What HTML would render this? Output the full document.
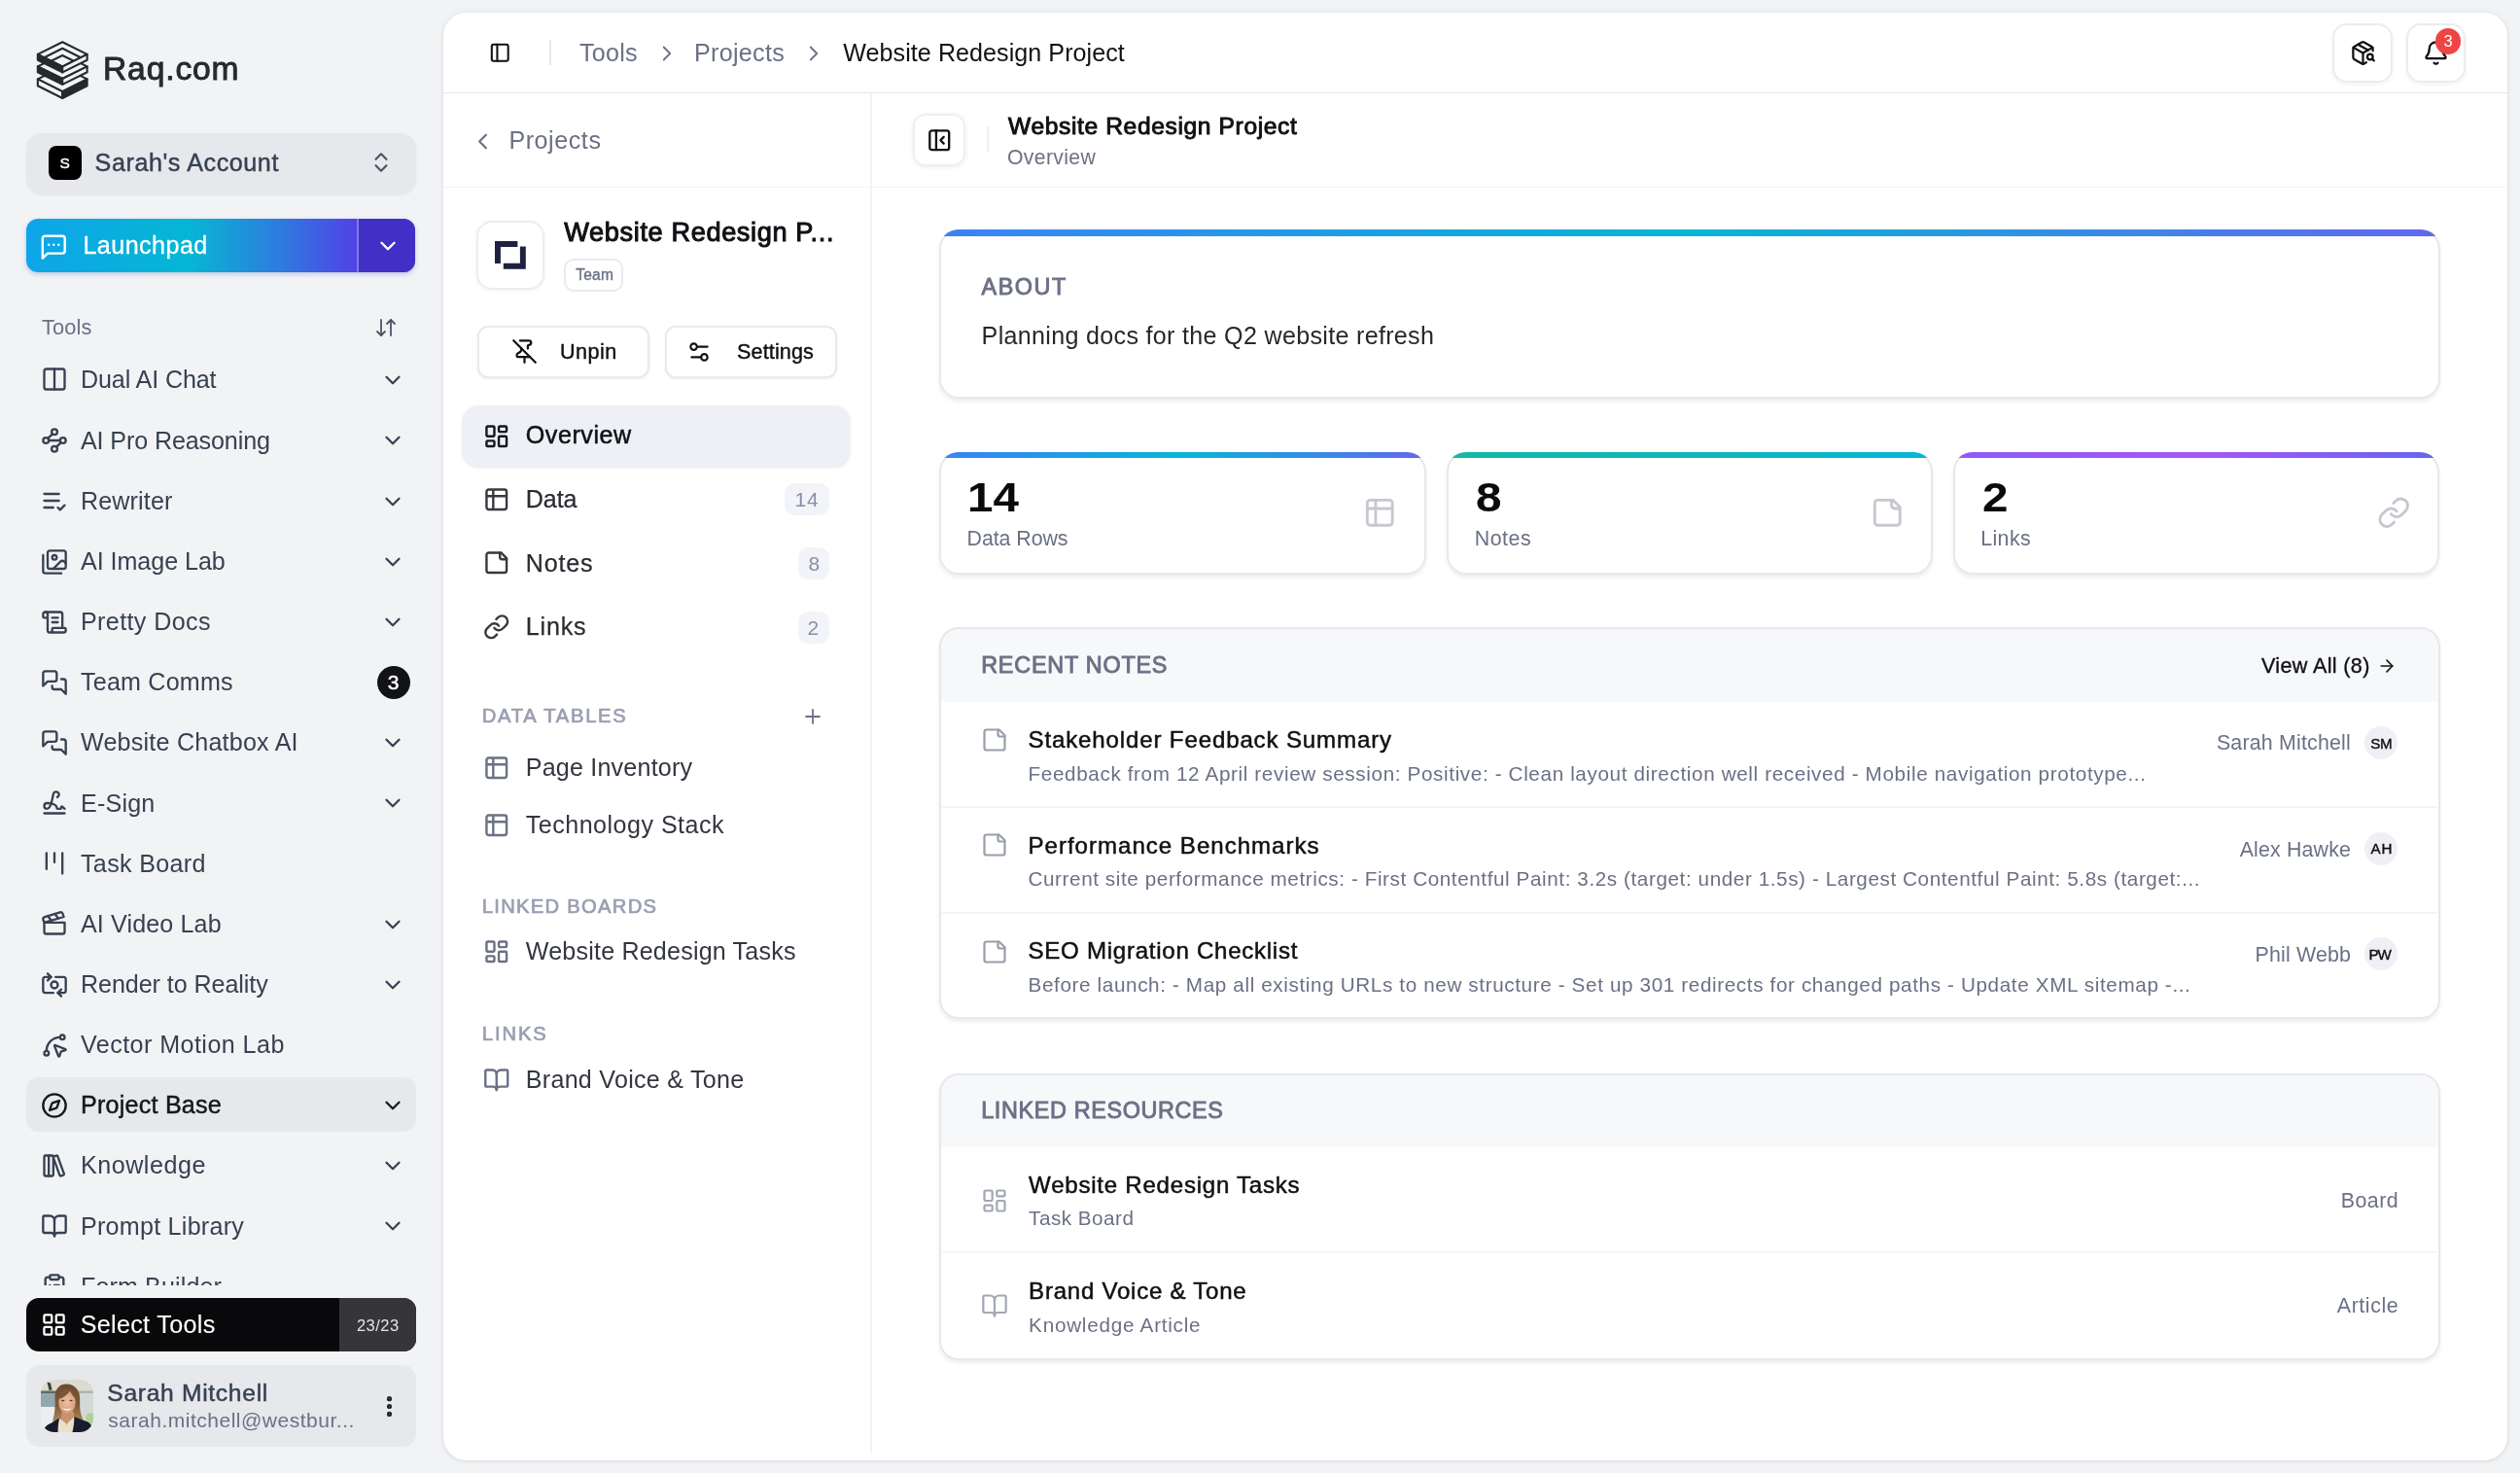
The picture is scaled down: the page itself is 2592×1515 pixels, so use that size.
<!DOCTYPE html>
<html lang="en"><head><meta charset="utf-8"><title>Website Redesign Project - Raq.com</title>
<style>
html,body{margin:0;padding:0}
body{width:2592px;height:1515px;overflow:hidden;background:#f2f3f5;font-family:"Liberation Sans", sans-serif;position:relative}
#r{position:absolute;left:0;top:0;width:2592px;height:1515px;overflow:hidden;will-change:transform}
#r div,#r svg,#r span{position:absolute;box-sizing:border-box}
#r svg{overflow:visible}
.t{white-space:nowrap;line-height:1;display:block}
</style></head>
<body><div id="r">
<div style="left:456px;top:13.3px;width:2122.8px;height:1489px;background:#fff;border-radius:24px;box-shadow:0 1px 4px rgba(20,20,40,.10),0 0 8px rgba(20,20,40,.04);"></div>
<svg style="left:32px;top:38px" width="64" height="68" viewBox="0 0 1386 1473" stroke="#262a2d" stroke-width="46" stroke-linejoin="round"><polygon points="698,665 1248,940 698,1215 148,940" fill="#f2f3f5"/><polygon points="148,940 698,1215 698,1365 148,1090" fill="#f2f3f5"/><polygon points="698,1215 1248,940 1248,1090 698,1365" fill="#262a2d"/><polygon points="698,383 1248,658 698,933 148,658" fill="#f2f3f5"/><polygon points="148,658 698,933 698,1059 148,784" fill="#262a2d"/><polygon points="698,933 1248,658 1248,784 698,1059" fill="#f2f3f5"/><polygon points="698,113 1248,388 698,663 148,388" fill="#f2f3f5"/><polygon points="698,255 1106,459 698,663 290,459" fill="none"/><polygon points="698,410 951,536.5 698,663 445,536.5" fill="none"/><polygon points="148,388 698,663 698,789 148,514" fill="#262a2d"/><polygon points="698,663 1248,388 1248,514 698,789" fill="#f2f3f5"/></svg>
<span class="t" style="top:54.36px;font-size:33.6px;color:#262a2d;-webkit-text-stroke:0.95px #262a2d;letter-spacing:0.868px;left:106.00px;">Raq.com</span>
<div style="left:27px;top:136.5px;width:401px;height:63px;background:#e6e8ec;border-radius:16px;box-shadow:0 1px 3px rgba(20,20,40,.05);"></div>
<div style="left:49.5px;top:150px;width:34.5px;height:34.5px;background:#000;border-radius:8px;"></div>
<span class="t" style="top:159.68px;font-size:15.5px;color:#fff;-webkit-text-stroke:0.35px #fff;left:61.60px;">S</span>
<span class="t" style="top:154.75px;font-size:25.1px;color:#374151;-webkit-text-stroke:0.45px #374151;letter-spacing:0.588px;left:97.60px;">Sarah's Account</span>
<svg style="left:378.5px;top:154px;" width="26" height="26" viewBox="0 0 24 24" fill="none" stroke="#4b5563" stroke-width="2" stroke-linecap="round" stroke-linejoin="round"><path d="m7 15 5 5 5-5"/><path d="m7 9 5-5 5 5"/></svg>
<div style="left:27px;top:225px;width:400px;height:55px;border-radius:12px;background:linear-gradient(90deg,#0ea5e9 0%,#06b6d4 42%,#2e7cde 65%,#4f46e5 83%);box-shadow:0 2px 5px rgba(40,60,160,.25);"></div>
<div style="left:367.4px;top:225px;width:59.6px;height:55px;border-radius:0 12px 12px 0;background:#4030c6;border-left:2px solid rgba(255,255,255,.35);"></div>
<svg style="left:40.15px;top:239.15px;" width="30.5" height="30.5" viewBox="0 0 24 24" fill="none" stroke="#fff" stroke-width="1.9" stroke-linecap="round" stroke-linejoin="round"><path d="M21 15a2 2 0 0 1-2 2H7l-4 4V5a2 2 0 0 1 2-2h14a2 2 0 0 1 2 2z"/><path d="M8 10h.01"/><path d="M12 10h.01"/><path d="M16 10h.01"/></svg>
<span class="t" style="top:239.95px;font-size:25.1px;color:#fff;-webkit-text-stroke:0.3px #fff;letter-spacing:0.458px;left:85.40px;">Launchpad</span>
<svg style="left:386px;top:240.3px;" width="26" height="26" viewBox="0 0 24 24" fill="none" stroke="#fff" stroke-width="2.2" stroke-linecap="round" stroke-linejoin="round"><path d="m6 9 6 6 6-6"/></svg>
<span class="t" style="top:325.85px;font-size:21.8px;color:#6b7085;letter-spacing:0.154px;left:42.90px;">Tools</span>
<svg style="left:385.2px;top:324.5px;" width="24" height="24" viewBox="0 0 24 24" fill="none" stroke="#4b5563" stroke-width="1.8" stroke-linecap="round" stroke-linejoin="round"><path d="m3 16 4 4 4-4"/><path d="M7 20V4"/><path d="m21 8-4-4-4 4"/><path d="M17 4v16"/></svg>
<div style="left:0;top:0;width:456px;height:1322px;overflow:hidden">
<svg style="left:42.4px;top:376.3px;" width="28" height="28" viewBox="0 0 24 24" fill="none" stroke="#374151" stroke-width="2" stroke-linecap="round" stroke-linejoin="round"><rect width="18" height="18" x="3" y="3" rx="2"/><path d="M12 3v18"/></svg>
<span class="t" style="top:377.70px;font-size:25.1px;color:#374151;letter-spacing:-0.118px;left:83.00px;">Dual AI Chat</span>
<svg style="left:391.3px;top:377.5px;" width="26" height="26" viewBox="0 0 24 24" fill="none" stroke="#374151" stroke-width="2.1" stroke-linecap="round" stroke-linejoin="round"><path d="m6 9 6 6 6-6"/></svg>
<svg style="left:42.4px;top:439.25px;" width="28" height="28" viewBox="0 0 24 24" fill="none" stroke="#374151" stroke-width="2" stroke-linecap="round" stroke-linejoin="round"><circle cx="12" cy="4.5" r="2.5"/><path d="m10.2 6.3-3.9 3.9"/><circle cx="4.5" cy="12" r="2.5"/><path d="M7 12h10"/><circle cx="19.5" cy="12" r="2.5"/><path d="m13.8 17.7 3.9-3.9"/><circle cx="12" cy="19.5" r="2.5"/></svg>
<span class="t" style="top:440.65px;font-size:25.1px;color:#374151;letter-spacing:-0.115px;left:83.00px;">AI Pro Reasoning</span>
<svg style="left:391.3px;top:440.45px;" width="26" height="26" viewBox="0 0 24 24" fill="none" stroke="#374151" stroke-width="2.1" stroke-linecap="round" stroke-linejoin="round"><path d="m6 9 6 6 6-6"/></svg>
<svg style="left:42.4px;top:501.4px;" width="28" height="28" viewBox="0 0 24 24" fill="none" stroke="#374151" stroke-width="2" stroke-linecap="round" stroke-linejoin="round"><path d="M11 18H3"/><path d="m15 18 2 2 4-4"/><path d="M16 12H3"/><path d="M16 6H3"/></svg>
<span class="t" style="top:502.80px;font-size:25.1px;color:#374151;letter-spacing:0.134px;left:83.00px;">Rewriter</span>
<svg style="left:391.3px;top:502.6px;" width="26" height="26" viewBox="0 0 24 24" fill="none" stroke="#374151" stroke-width="2.1" stroke-linecap="round" stroke-linejoin="round"><path d="m6 9 6 6 6-6"/></svg>
<svg style="left:42.4px;top:563.55px;" width="28" height="28" viewBox="0 0 24 24" fill="none" stroke="#374151" stroke-width="2" stroke-linecap="round" stroke-linejoin="round"><path d="M18 22H4a2 2 0 0 1-2-2V6"/><path d="m22 13-1.296-1.296a2.41 2.41 0 0 0-3.408 0L11 18"/><circle cx="12" cy="8" r="2"/><rect width="16" height="16" x="6" y="2" rx="2"/></svg>
<span class="t" style="top:564.95px;font-size:25.1px;color:#374151;letter-spacing:-0.046px;left:83.00px;">AI Image Lab</span>
<svg style="left:391.3px;top:564.75px;" width="26" height="26" viewBox="0 0 24 24" fill="none" stroke="#374151" stroke-width="2.1" stroke-linecap="round" stroke-linejoin="round"><path d="m6 9 6 6 6-6"/></svg>
<svg style="left:42.4px;top:625.7px;" width="28" height="28" viewBox="0 0 24 24" fill="none" stroke="#374151" stroke-width="2" stroke-linecap="round" stroke-linejoin="round"><path d="M15 12h-5"/><path d="M15 8h-5"/><path d="M19 17V5a2 2 0 0 0-2-2H4"/><path d="M8 21h12a2 2 0 0 0 2-2v-1a1 1 0 0 0-1-1H11a1 1 0 0 0-1 1v1a2 2 0 1 1-4 0V5a2 2 0 1 0-4 0v2a1 1 0 0 0 1 1h3"/></svg>
<span class="t" style="top:627.10px;font-size:25.1px;color:#374151;letter-spacing:0.376px;left:83.00px;">Pretty Docs</span>
<svg style="left:391.3px;top:626.9px;" width="26" height="26" viewBox="0 0 24 24" fill="none" stroke="#374151" stroke-width="2.1" stroke-linecap="round" stroke-linejoin="round"><path d="m6 9 6 6 6-6"/></svg>
<svg style="left:42.4px;top:687.85px;" width="28" height="28" viewBox="0 0 24 24" fill="none" stroke="#374151" stroke-width="2" stroke-linecap="round" stroke-linejoin="round"><path d="M14 9a2 2 0 0 1-2 2H6l-4 4V4a2 2 0 0 1 2-2h8a2 2 0 0 1 2 2z"/><path d="M18 9h2a2 2 0 0 1 2 2v11l-4-4h-6a2 2 0 0 1-2-2v-1"/></svg>
<span class="t" style="top:689.25px;font-size:25.1px;color:#374151;letter-spacing:0.198px;left:83.00px;">Team Comms</span>
<div style="left:387.5px;top:684.65px;width:34.2px;height:34.2px;background:#111318;border-radius:50%;"></div>
<span class="t" style="top:691.37px;font-size:21px;color:#fff;-webkit-text-stroke:0.5px #fff;left:398.70px;">3</span>
<svg style="left:42.4px;top:750px;" width="28" height="28" viewBox="0 0 24 24" fill="none" stroke="#374151" stroke-width="2" stroke-linecap="round" stroke-linejoin="round"><path d="M14 9a2 2 0 0 1-2 2H6l-4 4V4a2 2 0 0 1 2-2h8a2 2 0 0 1 2 2z"/><path d="M18 9h2a2 2 0 0 1 2 2v11l-4-4h-6a2 2 0 0 1-2-2v-1"/></svg>
<span class="t" style="top:751.40px;font-size:25.1px;color:#374151;letter-spacing:0.215px;left:83.00px;">Website Chatbox AI</span>
<svg style="left:391.3px;top:751.2px;" width="26" height="26" viewBox="0 0 24 24" fill="none" stroke="#374151" stroke-width="2.1" stroke-linecap="round" stroke-linejoin="round"><path d="m6 9 6 6 6-6"/></svg>
<svg style="left:42.4px;top:812.15px;" width="28" height="28" viewBox="0 0 24 24" fill="none" stroke="#374151" stroke-width="2" stroke-linecap="round" stroke-linejoin="round"><path d="m21 17-2.156-1.868A.5.5 0 0 0 18 15.5v.5a1 1 0 0 1-1 1h-2a1 1 0 0 1-1-1c0-2.545-3.991-3.97-8.5-4a1 1 0 0 0 0 5c4.153 0 4.745-11.295 5.708-13.5a2.5 2.5 0 1 1 3.31 3.284"/><path d="M3 21h18"/></svg>
<span class="t" style="top:813.55px;font-size:25.1px;color:#374151;letter-spacing:0.188px;left:83.00px;">E-Sign</span>
<svg style="left:391.3px;top:813.35px;" width="26" height="26" viewBox="0 0 24 24" fill="none" stroke="#374151" stroke-width="2.1" stroke-linecap="round" stroke-linejoin="round"><path d="m6 9 6 6 6-6"/></svg>
<svg style="left:42.4px;top:874.3px;" width="28" height="28" viewBox="0 0 24 24" fill="none" stroke="#374151" stroke-width="2" stroke-linecap="round" stroke-linejoin="round"><path d="M5 3v14"/><path d="M12 3v8"/><path d="M19 3v18"/></svg>
<span class="t" style="top:875.70px;font-size:25.1px;color:#374151;letter-spacing:0.314px;left:83.00px;">Task Board</span>
<svg style="left:42.4px;top:936.45px;" width="28" height="28" viewBox="0 0 24 24" fill="none" stroke="#374151" stroke-width="2" stroke-linecap="round" stroke-linejoin="round"><path d="M20.2 6 3 11l-.9-2.4c-.3-1.1.3-2.2 1.3-2.5l13.5-4c1.1-.3 2.2.3 2.5 1.3Z"/><path d="m6.2 5.3 3.1 3.9"/><path d="m12.4 3.4 3.1 4"/><path d="M3 11h18v8a2 2 0 0 1-2 2H5a2 2 0 0 1-2-2Z"/></svg>
<span class="t" style="top:937.85px;font-size:25.1px;color:#374151;letter-spacing:0.128px;left:83.00px;">AI Video Lab</span>
<svg style="left:391.3px;top:937.65px;" width="26" height="26" viewBox="0 0 24 24" fill="none" stroke="#374151" stroke-width="2.1" stroke-linecap="round" stroke-linejoin="round"><path d="m6 9 6 6 6-6"/></svg>
<svg style="left:42.4px;top:998.6px;" width="28" height="28" viewBox="0 0 24 24" fill="none" stroke="#374151" stroke-width="2" stroke-linecap="round" stroke-linejoin="round"><path d="M11 19H4a2 2 0 0 1-2-2V7a2 2 0 0 1 2-2h5"/><path d="M13 5h7a2 2 0 0 1 2 2v10a2 2 0 0 1-2 2h-5"/><circle cx="12" cy="12" r="3"/><path d="m18 22-3-3 3-3"/><path d="m6 2 3 3-3 3"/></svg>
<span class="t" style="top:1000.00px;font-size:25.1px;color:#374151;letter-spacing:-0.071px;left:83.00px;">Render to Reality</span>
<svg style="left:391.3px;top:999.8px;" width="26" height="26" viewBox="0 0 24 24" fill="none" stroke="#374151" stroke-width="2.1" stroke-linecap="round" stroke-linejoin="round"><path d="m6 9 6 6 6-6"/></svg>
<svg style="left:42.4px;top:1060.75px;" width="28" height="28" viewBox="0 0 24 24" fill="none" stroke="#374151" stroke-width="2" stroke-linecap="round" stroke-linejoin="round"><path d="M12.034 12.681a.498.498 0 0 1 .647-.647l9 3.5a.5.5 0 0 1-.033.943l-3.444 1.068a1 1 0 0 0-.66.66l-1.067 3.443a.5.5 0 0 1-.943.033z"/><path d="M5 17A12 12 0 0 1 17 5"/><circle cx="19" cy="5" r="2"/><circle cx="5" cy="19" r="2"/></svg>
<span class="t" style="top:1062.15px;font-size:25.1px;color:#374151;letter-spacing:0.443px;left:83.00px;">Vector Motion Lab</span>
<div style="left:27.3px;top:1108.2px;width:400.7px;height:55.5px;background:#e6e8ec;border-radius:13px;"></div>
<svg style="left:42.4px;top:1122.9px;" width="28" height="28" viewBox="0 0 24 24" fill="none" stroke="#15171c" stroke-width="2" stroke-linecap="round" stroke-linejoin="round"><path d="m16.24 7.76-1.804 5.411a2 2 0 0 1-1.265 1.265L7.76 16.24l1.804-5.411a2 2 0 0 1 1.265-1.265z"/><circle cx="12" cy="12" r="10"/></svg>
<span class="t" style="top:1124.30px;font-size:25.1px;color:#15171c;-webkit-text-stroke:0.45px #15171c;letter-spacing:0.226px;left:83.00px;">Project Base</span>
<svg style="left:391.3px;top:1124.1px;" width="26" height="26" viewBox="0 0 24 24" fill="none" stroke="#15171c" stroke-width="2.1" stroke-linecap="round" stroke-linejoin="round"><path d="m6 9 6 6 6-6"/></svg>
<svg style="left:42.4px;top:1185.05px;" width="28" height="28" viewBox="0 0 24 24" fill="none" stroke="#374151" stroke-width="2" stroke-linecap="round" stroke-linejoin="round"><rect width="8" height="18" x="3" y="3" rx="1"/><path d="M7 3v18"/><path d="M20.4 18.9c.2.5-.1 1.1-.6 1.3l-1.9.7c-.5.2-1.1-.1-1.3-.6L11.1 5.1c-.2-.5.1-1.1.6-1.3l1.9-.7c.5-.2 1.1.1 1.3.6Z"/></svg>
<span class="t" style="top:1186.45px;font-size:25.1px;color:#374151;letter-spacing:0.523px;left:83.00px;">Knowledge</span>
<svg style="left:391.3px;top:1186.25px;" width="26" height="26" viewBox="0 0 24 24" fill="none" stroke="#374151" stroke-width="2.1" stroke-linecap="round" stroke-linejoin="round"><path d="m6 9 6 6 6-6"/></svg>
<svg style="left:42.4px;top:1247.2px;" width="28" height="28" viewBox="0 0 24 24" fill="none" stroke="#374151" stroke-width="2" stroke-linecap="round" stroke-linejoin="round"><path d="M12 7v14"/><path d="M3 18a1 1 0 0 1-1-1V4a1 1 0 0 1 1-1h5a4 4 0 0 1 4 4 4 4 0 0 1 4-4h5a1 1 0 0 1 1 1v13a1 1 0 0 1-1 1h-6a3 3 0 0 0-3 3 3 3 0 0 0-3-3z"/></svg>
<span class="t" style="top:1248.60px;font-size:25.1px;color:#374151;letter-spacing:0.253px;left:83.00px;">Prompt Library</span>
<svg style="left:391.3px;top:1248.4px;" width="26" height="26" viewBox="0 0 24 24" fill="none" stroke="#374151" stroke-width="2.1" stroke-linecap="round" stroke-linejoin="round"><path d="m6 9 6 6 6-6"/></svg>
<svg style="left:42.4px;top:1309.35px;" width="28" height="28" viewBox="0 0 24 24" fill="none" stroke="#374151" stroke-width="2" stroke-linecap="round" stroke-linejoin="round"><rect width="8" height="4" x="8" y="2" rx="1" ry="1"/><path d="M16 4h2a2 2 0 0 1 2 2v14a2 2 0 0 1-2 2H6a2 2 0 0 1-2-2V6a2 2 0 0 1 2-2h2"/><path d="M12 11h4"/><path d="M12 16h4"/><path d="M8 11h.01"/><path d="M8 16h.01"/></svg>
<span class="t" style="top:1310.75px;font-size:25.1px;color:#374151;letter-spacing:0.121px;left:83.00px;">Form Builder</span>
</div>
<div style="left:27px;top:1334.6px;width:400.6px;height:55.5px;background:#09090b;border-radius:13px;overflow:hidden;"><div style="left:321.7px;top:0;width:79px;height:55.5px;background:#363639"></div></div>
<svg style="left:42.1px;top:1348.9px;" width="27" height="27" viewBox="0 0 24 24" fill="none" stroke="#fff" stroke-width="2" stroke-linecap="round" stroke-linejoin="round"><rect width="7" height="7" x="3" y="3" rx="1"/><rect width="7" height="7" x="14" y="3" rx="1"/><rect width="7" height="7" x="14" y="14" rx="1"/><rect width="7" height="7" x="3" y="14" rx="1"/></svg>
<span class="t" style="top:1349.95px;font-size:25.1px;color:#fff;-webkit-text-stroke:0.1px #fff;letter-spacing:0.332px;left:82.70px;">Select Tools</span>
<span class="t" style="top:1354.73px;font-size:16.5px;color:#e4e4e7;letter-spacing:0.447px;left:367.00px;">23/23</span>
<div style="left:27px;top:1404.2px;width:400.6px;height:83.6px;background:#e6e8ec;border-radius:14px;"></div>
<div style="left:42px;top:1419px;width:54px;height:54px;border-radius:14px;overflow:hidden"><svg style="left:0;top:0" width="54" height="54" viewBox="0 0 54 54">
<defs><filter id="avb" x="-10%" y="-10%" width="120%" height="120%"><feGaussianBlur stdDeviation="0.7"/></filter>
<linearGradient id="avh" x1="0" y1="0" x2="0" y2="1"><stop offset="0" stop-color="#6b4a30"/><stop offset=".55" stop-color="#80593a"/><stop offset="1" stop-color="#b38a5c"/></linearGradient>
<radialGradient id="avf" cx=".5" cy=".45" r=".6"><stop offset="0" stop-color="#ecc0a2"/><stop offset=".7" stop-color="#dca684"/><stop offset="1" stop-color="#c48c69"/></radialGradient></defs>
<g filter="url(#avb)">
<rect x="-2" y="-2" width="58" height="58" fill="#dfe3e1"/>
<rect x="-2" y="-2" width="58" height="14" fill="#dcdbcf"/>
<rect x="-2" y="11.500" width="18" height="3" fill="#5f6b67"/>
<rect x="-2" y="14" width="17" height="14.500" fill="#93a8ae"/>
<rect x="-2" y="28" width="16" height="28" fill="#eceff2"/>
<rect x="38" y="11.500" width="18" height="3" fill="#aab5b0"/>
<rect x="38" y="14" width="18" height="42" fill="#d3dad5"/>
<ellipse cx="51" cy="40" rx="5" ry="6" fill="#b4d097"/>
<path d="M6.500 2.500l3.500 1 1.500 7-3 .5z" fill="#3f3f36"/>
<path d="M26.500 4.500c-8 0-12.500 6-12 15 .3 7 .5 14-2.500 23l10 2 14-1 7.500-3c-3.500-6-3.500-13-3.300-20 .4-9-5-16-13.700-16z" fill="url(#avh)"/>
<path d="M21.500 33h12.500l.5 14h-14z" fill="#c9926e"/>
<ellipse cx="27" cy="23.300" rx="8.800" ry="11.800" fill="url(#avf)"/>
<path d="M18 20c.5-7 4.500-10.500 9-10.300 5 .2 8.500 4 9 10-3-2.500-5-5.500-6-8.500-2.500 4.500-6.500 7.500-12 8.800z" fill="#7a5538"/>
<ellipse cx="22.800" cy="21.500" rx="1.700" ry=".8" fill="#5a3b2a"/><ellipse cx="31" cy="21.500" rx="1.700" ry=".8" fill="#5a3b2a"/>
<path d="M22.500 29.300c2.500 1.400 6.500 1.400 9 0-.8 3.300-8.200 3.300-9 0z" fill="#fbf3ee"/>
<path d="M19 39.500l7.500 6 7.500-7 2 15.500h-20z" fill="#eadfc9"/>
<path d="M23.500 38l3 9 4-9.500z" fill="#c9926e"/>
<path d="M3 56c-.5-6 2-9 7-11l9-5.500c-1 5-1.500 10-1.500 16.500z" fill="#161a2b"/>
<path d="M34.500 38.300l12 4.500c5 2 7 5 7.500 13.200h-22c1.500-6 2.500-12 2.500-17.700z" fill="#161a2b"/>
</g></svg></div>

<span class="t" style="top:1420.58px;font-size:24.6px;color:#374151;-webkit-text-stroke:0.5px #374151;letter-spacing:0.703px;left:110.30px;">Sarah Mitchell</span>
<span class="t" style="top:1449.82px;font-size:21px;color:#6b7085;letter-spacing:0.512px;left:111.30px;">sarah.mitchell@westbur...</span>
<svg style="left:387.3px;top:1432.9px;" width="27" height="27" viewBox="0 0 24 24" fill="none" stroke="#23262d" stroke-width="2.6" stroke-linecap="round" stroke-linejoin="round"><circle cx="12" cy="12" r="1"/><circle cx="12" cy="5" r="1"/><circle cx="12" cy="19" r="1"/></svg>
<div style="left:456px;top:94.6px;width:2123px;height:1.4px;background:#e4e5ec;"></div>
<svg style="left:502.55px;top:43.45px;" width="22.5" height="22.5" viewBox="0 0 24 24" fill="none" stroke="#111" stroke-width="2.2" stroke-linecap="round" stroke-linejoin="round"><rect width="18" height="18" x="3" y="3" rx="2"/><path d="M9 3v18"/></svg>
<div style="left:565px;top:41px;width:2px;height:26px;background:#e7e8ee;"></div>
<span class="t" style="top:41.55px;font-size:25.1px;color:#6b7085;letter-spacing:0.217px;left:596.10px;">Tools</span>
<svg style="left:672.6px;top:41.8px;" width="26" height="26" viewBox="0 0 24 24" fill="none" stroke="#6b7085" stroke-width="1.7" stroke-linecap="round" stroke-linejoin="round"><path d="m9 18 6-6-6-6"/></svg>
<span class="t" style="top:41.55px;font-size:25.1px;color:#6b7085;letter-spacing:0.286px;left:714.10px;">Projects</span>
<svg style="left:824px;top:41.8px;" width="26" height="26" viewBox="0 0 24 24" fill="none" stroke="#6b7085" stroke-width="1.7" stroke-linecap="round" stroke-linejoin="round"><path d="m9 18 6-6-6-6"/></svg>
<span class="t" style="top:41.55px;font-size:25.1px;color:#101114;letter-spacing:0.053px;left:867.30px;">Website Redesign Project</span>
<div style="left:2398.8px;top:24.2px;width:62px;height:60.8px;background:#fff;border:2px solid #ebecf2;border-radius:15px;box-shadow:0 2px 4px rgba(20,20,40,.05);"></div>
<div style="left:2474.8px;top:24.2px;width:61.5px;height:60.8px;background:#fff;border:2px solid #ebecf2;border-radius:15px;box-shadow:0 2px 4px rgba(20,20,40,.05);"></div>
<svg style="left:2417.1px;top:41px;" width="27" height="27" viewBox="0 0 24 24" fill="none" stroke="#111" stroke-width="2" stroke-linecap="round" stroke-linejoin="round"><path d="M21 10V8a2 2 0 0 0-1-1.73l-7-4a2 2 0 0 0-2 0l-7 4A2 2 0 0 0 3 8v8a2 2 0 0 0 1 1.73l7 4a2 2 0 0 0 2 0l2-1.14"/><path d="m7.5 4.27 9 5.15"/><polyline points="3.29 7 12 12 20.71 7"/><line x1="12" x2="12" y1="22" y2="12"/><circle cx="18.5" cy="15.5" r="2.5"/><path d="M20.27 17.27 22 19"/></svg>
<svg style="left:2491.8px;top:41.3px;" width="27" height="27" viewBox="0 0 24 24" fill="none" stroke="#111" stroke-width="2" stroke-linecap="round" stroke-linejoin="round"><path d="M10.268 21a2 2 0 0 0 3.464 0"/><path d="M3.262 15.326A1 1 0 0 0 4 17h16a1 1 0 0 0 .74-1.673C19.41 13.956 18 12.499 18 8A6 6 0 0 0 6 8c0 4.499-1.411 5.956-2.738 7.326"/></svg>
<div style="left:2504.7px;top:29.2px;width:26.6px;height:26.6px;background:#ef4444;border-radius:50%;"></div>
<span class="t" style="top:34.23px;font-size:16.5px;color:#fff;left:2513.60px;">3</span>
<div style="left:456px;top:191.6px;width:2122px;height:1.8px;background:#f2f3f6;"></div>
<div style="left:894.8px;top:96px;width:2px;height:1398px;background:#f2f3f6;"></div>
<svg style="left:483.1px;top:131.7px;" width="27" height="27" viewBox="0 0 24 24" fill="none" stroke="#6b7085" stroke-width="1.9" stroke-linecap="round" stroke-linejoin="round"><path d="m15 18-6-6 6-6"/></svg>
<span class="t" style="top:132.05px;font-size:25.1px;color:#6b7085;letter-spacing:0.557px;left:523.40px;">Projects</span>
<div style="left:939.4px;top:117.4px;width:53.2px;height:53.4px;background:#fff;border:2px solid #eeeff3;border-radius:13px;box-shadow:0 1px 5px rgba(20,20,40,.08);"></div>
<svg style="left:952.95px;top:131.15px;" width="26.5" height="26.5" viewBox="0 0 24 24" fill="none" stroke="#111" stroke-width="2.1" stroke-linecap="round" stroke-linejoin="round"><rect width="18" height="18" x="3" y="3" rx="2"/><path d="M9 3v18"/><path d="m16 15-3-3 3-3"/></svg>
<div style="left:1014.5px;top:130px;width:2px;height:27px;background:#eeeff4;"></div>
<span class="t" style="top:117.58px;font-size:24.6px;color:#101114;-webkit-text-stroke:0.95px #101114;letter-spacing:0.622px;left:1037.00px;">Website Redesign Project</span>
<span class="t" style="top:150.55px;font-size:21.2px;color:#6b7085;letter-spacing:0.357px;left:1036.00px;">Overview</span>
<div style="left:489.8px;top:227px;width:70.4px;height:70.5px;background:#fff;border:2px solid #ededf2;border-radius:16px;box-shadow:0 1px 4px rgba(20,20,40,.06);"></div>
<svg style="left:509px;top:248px" width="32" height="29" viewBox="0 0 32 29" fill="none" stroke="#1e2140" stroke-width="5.900"><path d="M2.950 22.900V2.950H23.400"/><path d="M8.800 25.700H28.850V5.600"/></svg>
<span class="t" style="top:224.98px;font-size:27.2px;color:#101114;-webkit-text-stroke:1px #101114;letter-spacing:0.609px;left:580.30px;">Website Redesign P...</span>
<div style="left:579.6px;top:266px;width:61.8px;height:33.6px;background:#fff;border:2px solid #e9eaf0;border-radius:10px;"></div>
<span class="t" style="top:274.79px;font-size:15.6px;color:#6b7085;-webkit-text-stroke:0.35px #6b7085;letter-spacing:0.220px;left:592.20px;">Team</span>
<div style="left:491px;top:335px;width:177px;height:53.6px;background:#fff;border:2px solid #e9eaf0;border-radius:11px;box-shadow:0 1px 3px rgba(20,20,40,.07);"></div>
<div style="left:683.6px;top:335px;width:177px;height:53.6px;background:#fff;border:2px solid #e9eaf0;border-radius:11px;box-shadow:0 1px 3px rgba(20,20,40,.07);"></div>
<svg style="left:525.6px;top:348.3px;" width="27" height="27" viewBox="0 0 24 24" fill="none" stroke="#111" stroke-width="2" stroke-linecap="round" stroke-linejoin="round"><path d="M12 17v5"/><path d="M15 9.34V7a1 1 0 0 1 1-1 2 2 0 0 0 0-4H7.89"/><path d="m2 2 20 20"/><path d="M9 9v1.76a2 2 0 0 1-1.11 1.79l-1.78.9A2 2 0 0 0 5 15.24V16a1 1 0 0 0 1 1h11"/></svg>
<span class="t" style="top:350.72px;font-size:21.6px;color:#101114;-webkit-text-stroke:0.4px #101114;letter-spacing:0.422px;left:576.10px;">Unpin</span>
<svg style="left:706px;top:348.8px;" width="26" height="26" viewBox="0 0 24 24" fill="none" stroke="#111" stroke-width="2" stroke-linecap="round" stroke-linejoin="round"><path d="M20 7h-9"/><path d="M14 17H5"/><circle cx="17" cy="17" r="3"/><circle cx="7" cy="7" r="3"/></svg>
<span class="t" style="top:350.72px;font-size:21.6px;color:#101114;-webkit-text-stroke:0.4px #101114;letter-spacing:0.110px;left:758.10px;">Settings</span>
<div style="left:474.8px;top:416.8px;width:399.8px;height:64.1px;background:#eff0f6;border-radius:17px;box-shadow:0 1px 3px rgba(20,20,40,.06);"></div>
<svg style="left:496.65px;top:435.05px;" width="27.5" height="27.5" viewBox="0 0 24 24" fill="none" stroke="#15171c" stroke-width="2.1" stroke-linecap="round" stroke-linejoin="round"><rect width="7" height="9" x="3" y="3" rx="1"/><rect width="7" height="5" x="14" y="3" rx="1"/><rect width="7" height="9" x="14" y="12" rx="1"/><rect width="7" height="5" x="3" y="16" rx="1"/></svg>
<span class="t" style="top:435.15px;font-size:25.1px;color:#101114;-webkit-text-stroke:0.5px #101114;letter-spacing:0.535px;left:540.80px;">Overview</span>
<svg style="left:496.65px;top:499.75px;" width="27.5" height="27.5" viewBox="0 0 24 24" fill="none" stroke="#38393f" stroke-width="2.1" stroke-linecap="round" stroke-linejoin="round"><path d="M9 3H5a2 2 0 0 0-2 2v4m6-6h10a2 2 0 0 1 2 2v4M9 3v18m0 0h10a2 2 0 0 0 2-2V9M9 21H5a2 2 0 0 1-2-2V9m0 0h18"/></svg>
<span class="t" style="top:500.85px;font-size:25.1px;color:#2b2c31;-webkit-text-stroke:0.25px #2b2c31;letter-spacing:-0.083px;left:540.80px;">Data</span>
<div style="left:807px;top:497.1px;width:46px;height:33px;background:#f3f4f9;border-radius:10px;"></div>
<span class="t" style="top:503.02px;font-size:21px;color:#8a8ea3;letter-spacing:0.821px;left:817.50px;">14</span>
<svg style="left:496.65px;top:565.45px;" width="27.5" height="27.5" viewBox="0 0 24 24" fill="none" stroke="#38393f" stroke-width="2.1" stroke-linecap="round" stroke-linejoin="round"><path d="M16 3H5a2 2 0 0 0-2 2v14a2 2 0 0 0 2 2h14a2 2 0 0 0 2-2V8Z"/><path d="M15 3v4a2 2 0 0 0 2 2h4"/></svg>
<span class="t" style="top:566.55px;font-size:25.1px;color:#2b2c31;-webkit-text-stroke:0.25px #2b2c31;letter-spacing:0.799px;left:540.80px;">Notes</span>
<div style="left:820.6px;top:562.8px;width:32.4px;height:33px;background:#f3f4f9;border-radius:10px;"></div>
<span class="t" style="top:568.72px;font-size:21px;color:#8a8ea3;left:831.50px;">8</span>
<svg style="left:496.65px;top:631.25px;" width="27.5" height="27.5" viewBox="0 0 24 24" fill="none" stroke="#38393f" stroke-width="2.1" stroke-linecap="round" stroke-linejoin="round"><path d="M10 13a5 5 0 0 0 7.54.54l3-3a5 5 0 0 0-7.07-7.07l-1.72 1.71"/><path d="M14 11a5 5 0 0 0-7.54-.54l-3 3a5 5 0 0 0 7.07 7.07l1.71-1.71"/></svg>
<span class="t" style="top:632.35px;font-size:25.1px;color:#2b2c31;-webkit-text-stroke:0.25px #2b2c31;letter-spacing:0.792px;left:540.80px;">Links</span>
<div style="left:820.6px;top:628.6px;width:32.4px;height:33px;background:#f3f4f9;border-radius:10px;"></div>
<span class="t" style="top:634.52px;font-size:21px;color:#8a8ea3;left:830.50px;">2</span>
<span class="t" style="top:726.40px;font-size:20.2px;color:#9a9eb2;-webkit-text-stroke:0.7px #9a9eb2;letter-spacing:1.700px;left:495.80px;">DATA TABLES</span>
<svg style="left:823.5px;top:724.7px;" width="24" height="24" viewBox="0 0 24 24" fill="none" stroke="#6b7085" stroke-width="1.8" stroke-linecap="round" stroke-linejoin="round"><path d="M5 12h14"/><path d="M12 5v14"/></svg>
<span class="t" style="top:921.60px;font-size:20.2px;color:#9a9eb2;-webkit-text-stroke:0.7px #9a9eb2;letter-spacing:1.282px;left:495.80px;">LINKED BOARDS</span>
<span class="t" style="top:1052.50px;font-size:20.2px;color:#9a9eb2;-webkit-text-stroke:0.7px #9a9eb2;letter-spacing:1.905px;left:495.80px;">LINKS</span>
<svg style="left:496.65px;top:775.55px;" width="27.5" height="27.5" viewBox="0 0 24 24" fill="none" stroke="#6b7085" stroke-width="2.1" stroke-linecap="round" stroke-linejoin="round"><path d="M9 3H5a2 2 0 0 0-2 2v4m6-6h10a2 2 0 0 1 2 2v4M9 3v18m0 0h10a2 2 0 0 0 2-2V9M9 21H5a2 2 0 0 1-2-2V9m0 0h18"/></svg>
<span class="t" style="top:776.65px;font-size:25.1px;color:#33363f;letter-spacing:0.189px;left:540.80px;">Page Inventory</span>
<svg style="left:496.65px;top:834.55px;" width="27.5" height="27.5" viewBox="0 0 24 24" fill="none" stroke="#6b7085" stroke-width="2.1" stroke-linecap="round" stroke-linejoin="round"><path d="M9 3H5a2 2 0 0 0-2 2v4m6-6h10a2 2 0 0 1 2 2v4M9 3v18m0 0h10a2 2 0 0 0 2-2V9M9 21H5a2 2 0 0 1-2-2V9m0 0h18"/></svg>
<span class="t" style="top:835.65px;font-size:25.1px;color:#33363f;letter-spacing:0.471px;left:540.80px;">Technology Stack</span>
<svg style="left:496.65px;top:964.85px;" width="27.5" height="27.5" viewBox="0 0 24 24" fill="none" stroke="#6b7085" stroke-width="2.1" stroke-linecap="round" stroke-linejoin="round"><rect width="7" height="9" x="3" y="3" rx="1"/><rect width="7" height="5" x="14" y="3" rx="1"/><rect width="7" height="9" x="14" y="12" rx="1"/><rect width="7" height="5" x="3" y="16" rx="1"/></svg>
<span class="t" style="top:965.95px;font-size:25.1px;color:#33363f;letter-spacing:0.183px;left:540.80px;">Website Redesign Tasks</span>
<svg style="left:496.65px;top:1096.55px;" width="27.5" height="27.5" viewBox="0 0 24 24" fill="none" stroke="#6b7085" stroke-width="2.1" stroke-linecap="round" stroke-linejoin="round"><path d="M12 7v14"/><path d="M3 18a1 1 0 0 1-1-1V4a1 1 0 0 1 1-1h5a4 4 0 0 1 4 4 4 4 0 0 1 4-4h5a1 1 0 0 1 1 1v13a1 1 0 0 1-1 1h-6a3 3 0 0 0-3 3 3 3 0 0 0-3-3z"/></svg>
<span class="t" style="top:1097.65px;font-size:25.1px;color:#33363f;letter-spacing:0.261px;left:540.80px;">Brand Voice &amp; Tone</span>
<div style="left:965.8px;top:235.5px;width:1543.8px;height:174.2px;background:#fff;border-radius:20px;box-shadow:0 3px 5px -1px rgba(20,20,40,.10);"></div>
<div style="left:965.8px;top:235.5px;width:1543.8px;height:174.2px;border-radius:20px;border:2px solid #e7e8ec;"></div>
<div style="left:965.8px;top:235.5px;width:1543.8px;height:174.2px;border-radius:20px;overflow:hidden;"><div style="left:0;top:0;width:1543.8px;height:7px;background:linear-gradient(90deg,#3b82f6 0%,#06b6d4 50%,#6366f1 100%)"></div></div>
<span class="t" style="top:283.79px;font-size:23.4px;color:#6b7085;-webkit-text-stroke:0.9px #6b7085;letter-spacing:1.528px;left:1009.60px;">ABOUT</span>
<span class="t" style="top:333.05px;font-size:25.1px;color:#26282e;letter-spacing:0.308px;left:1009.60px;">Planning docs for the Q2 website refresh</span>
<div style="left:966.1px;top:464.8px;width:500.8px;height:125.8px;background:#fff;border-radius:20px;box-shadow:0 3px 5px -1px rgba(20,20,40,.10);"></div>
<div style="left:966.1px;top:464.8px;width:500.8px;height:125.8px;border-radius:20px;border:2px solid #e7e8ec;"></div>
<div style="left:966.1px;top:464.8px;width:500.8px;height:125.8px;border-radius:20px;overflow:hidden;"><div style="left:0;top:0;width:500.8px;height:6.2px;background:linear-gradient(90deg,#3b82f6,#06b6d4 50%,#6366f1)"></div></div>
<span class="t" style="top:490.92px;font-size:41.8px;color:#0a0a0c;font-weight:700;left:995.30px;transform:scaleX(1.14);transform-origin:0 0;">14</span>
<span class="t" style="top:544.08px;font-size:21.4px;color:#6b7085;letter-spacing:-0.090px;left:994.60px;">Data Rows</span>
<svg style="left:1402.25px;top:510.15px;" width="34.5" height="34.5" viewBox="0 0 24 24" fill="none" stroke="#c6c8cf" stroke-width="2" stroke-linecap="round" stroke-linejoin="round"><path d="M9 3H5a2 2 0 0 0-2 2v4m6-6h10a2 2 0 0 1 2 2v4M9 3v18m0 0h10a2 2 0 0 0 2-2V9M9 21H5a2 2 0 0 1-2-2V9m0 0h18"/></svg>
<div style="left:1488.2px;top:464.8px;width:499.4px;height:125.8px;background:#fff;border-radius:20px;box-shadow:0 3px 5px -1px rgba(20,20,40,.10);"></div>
<div style="left:1488.2px;top:464.8px;width:499.4px;height:125.8px;border-radius:20px;border:2px solid #e7e8ec;"></div>
<div style="left:1488.2px;top:464.8px;width:499.4px;height:125.8px;border-radius:20px;overflow:hidden;"><div style="left:0;top:0;width:499.4px;height:6.2px;background:linear-gradient(90deg,#14b8a6,#06b6d4)"></div></div>
<span class="t" style="top:490.92px;font-size:41.8px;color:#0a0a0c;font-weight:700;left:1518.40px;transform:scaleX(1.14);transform-origin:0 0;">8</span>
<span class="t" style="top:544.08px;font-size:21.4px;color:#6b7085;letter-spacing:0.529px;left:1516.70px;">Notes</span>
<svg style="left:1924.35px;top:510.15px;" width="34.5" height="34.5" viewBox="0 0 24 24" fill="none" stroke="#c6c8cf" stroke-width="2" stroke-linecap="round" stroke-linejoin="round"><path d="M16 3H5a2 2 0 0 0-2 2v14a2 2 0 0 0 2 2h14a2 2 0 0 0 2-2V8Z"/><path d="M15 3v4a2 2 0 0 0 2 2h4"/></svg>
<div style="left:2008.7px;top:464.8px;width:500.1px;height:125.8px;background:#fff;border-radius:20px;box-shadow:0 3px 5px -1px rgba(20,20,40,.10);"></div>
<div style="left:2008.7px;top:464.8px;width:500.1px;height:125.8px;border-radius:20px;border:2px solid #e7e8ec;"></div>
<div style="left:2008.7px;top:464.8px;width:500.1px;height:125.8px;border-radius:20px;overflow:hidden;"><div style="left:0;top:0;width:500.1px;height:6.2px;background:linear-gradient(90deg,#8b5cf6,#a855f7 50%,#6366f1)"></div></div>
<span class="t" style="top:490.92px;font-size:41.8px;color:#0a0a0c;font-weight:700;left:2038.90px;transform:scaleX(1.14);transform-origin:0 0;">2</span>
<span class="t" style="top:544.08px;font-size:21.4px;color:#6b7085;letter-spacing:0.390px;left:2037.20px;">Links</span>
<svg style="left:2444.85px;top:510.15px;" width="34.5" height="34.5" viewBox="0 0 24 24" fill="none" stroke="#c6c8cf" stroke-width="2" stroke-linecap="round" stroke-linejoin="round"><path d="M10 13a5 5 0 0 0 7.54.54l3-3a5 5 0 0 0-7.07-7.07l-1.72 1.71"/><path d="M14 11a5 5 0 0 0-7.54-.54l-3 3a5 5 0 0 0 7.07 7.07l1.71-1.71"/></svg>
<div style="left:965.8px;top:645.2px;width:1543.8px;height:403.2px;background:#fff;border-radius:20px;box-shadow:0 3px 5px -1px rgba(20,20,40,.10);"></div>
<div style="left:965.8px;top:645.2px;width:1543.8px;height:403.2px;border-radius:20px;overflow:hidden;"><div style="left:0;top:0;width:1543.8px;height:76.8px;background:#f7f8fa"></div></div>
<div style="left:965.8px;top:645.2px;width:1543.8px;height:403.2px;border-radius:20px;border:2px solid #e7e8ec;"></div>
<span class="t" style="top:673.19px;font-size:23.4px;color:#6b7085;-webkit-text-stroke:0.9px #6b7085;letter-spacing:0.769px;left:1009.20px;">RECENT NOTES</span>
<span class="t" style="top:673.72px;font-size:21.6px;color:#101114;-webkit-text-stroke:0.35px #101114;letter-spacing:0.354px;left:2325.90px;">View All (8)</span>
<svg style="left:2445.4px;top:674.6px;" width="20" height="20" viewBox="0 0 24 24" fill="none" stroke="#111" stroke-width="1.9" stroke-linecap="round" stroke-linejoin="round"><path d="M5 12h14"/><path d="m12 5 7 7-7 7"/></svg>
<svg style="left:1009.1px;top:746.8px;" width="28" height="28" viewBox="0 0 24 24" fill="none" stroke="#9a9eab" stroke-width="1.9" stroke-linecap="round" stroke-linejoin="round"><path d="M16 3H5a2 2 0 0 0-2 2v14a2 2 0 0 0 2 2h14a2 2 0 0 0 2-2V8Z"/><path d="M15 3v4a2 2 0 0 0 2 2h4"/></svg>
<span class="t" style="top:749.20px;font-size:24.1px;color:#101114;-webkit-text-stroke:0.5px #101114;letter-spacing:0.840px;left:1057.50px;">Stakeholder Feedback Summary</span>
<span class="t" style="top:786.08px;font-size:20.7px;color:#6b7085;letter-spacing:0.625px;left:1057.50px;">Feedback from 12 April review session: Positive: - Clean layout direction well received - Mobile navigation prototype...</span>
<span class="t" style="top:753.78px;font-size:21.4px;color:#6b7085;letter-spacing:0.179px;left:2279.90px;">Sarah Mitchell</span>
<div style="left:2431.5px;top:747.2px;width:34.2px;height:34.2px;background:#eff0f6;border-radius:50%;"></div>
<span class="t" style="top:757.03px;font-size:15.2px;color:#111;-webkit-text-stroke:0.4px #111;letter-spacing:-0.430px;left:2438.30px;">SM</span>
<div style="left:969px;top:829.4px;width:1538px;height:2px;background:#f4f5f8;"></div>
<svg style="left:1009.1px;top:855.2px;" width="28" height="28" viewBox="0 0 24 24" fill="none" stroke="#9a9eab" stroke-width="1.9" stroke-linecap="round" stroke-linejoin="round"><path d="M16 3H5a2 2 0 0 0-2 2v14a2 2 0 0 0 2 2h14a2 2 0 0 0 2-2V8Z"/><path d="M15 3v4a2 2 0 0 0 2 2h4"/></svg>
<span class="t" style="top:857.60px;font-size:24.1px;color:#101114;-webkit-text-stroke:0.5px #101114;letter-spacing:0.977px;left:1057.50px;">Performance Benchmarks</span>
<span class="t" style="top:894.48px;font-size:20.7px;color:#6b7085;letter-spacing:0.580px;left:1057.50px;">Current site performance metrics: - First Contentful Paint: 3.2s (target: under 1.5s) - Largest Contentful Paint: 5.8s (target:...</span>
<span class="t" style="top:863.78px;font-size:21.4px;color:#6b7085;letter-spacing:0.140px;left:2303.70px;">Alex Hawke</span>
<div style="left:2431.5px;top:855.6px;width:34.2px;height:34.2px;background:#eff0f6;border-radius:50%;"></div>
<span class="t" style="top:865.43px;font-size:15.2px;color:#111;-webkit-text-stroke:0.4px #111;letter-spacing:0.670px;left:2438.60px;">AH</span>
<div style="left:969px;top:937.6px;width:1538px;height:2px;background:#f4f5f8;"></div>
<svg style="left:1009.1px;top:964.8px;" width="28" height="28" viewBox="0 0 24 24" fill="none" stroke="#9a9eab" stroke-width="1.9" stroke-linecap="round" stroke-linejoin="round"><path d="M16 3H5a2 2 0 0 0-2 2v14a2 2 0 0 0 2 2h14a2 2 0 0 0 2-2V8Z"/><path d="M15 3v4a2 2 0 0 0 2 2h4"/></svg>
<span class="t" style="top:965.80px;font-size:24.1px;color:#101114;-webkit-text-stroke:0.5px #101114;letter-spacing:0.718px;left:1057.50px;">SEO Migration Checklist</span>
<span class="t" style="top:1002.68px;font-size:20.7px;color:#6b7085;letter-spacing:0.620px;left:1057.50px;">Before launch: - Map all existing URLs to new structure - Set up 301 redirects for changed paths - Update XML sitemap -...</span>
<span class="t" style="top:971.98px;font-size:21.4px;color:#6b7085;letter-spacing:0.149px;left:2319.60px;">Phil Webb</span>
<div style="left:2431.5px;top:963.8px;width:34.2px;height:34.2px;background:#eff0f6;border-radius:50%;"></div>
<span class="t" style="top:973.63px;font-size:15.2px;color:#111;-webkit-text-stroke:0.4px #111;letter-spacing:-1.130px;left:2436.60px;">PW</span>
<div style="left:965.8px;top:1103.8px;width:1543.8px;height:295px;background:#fff;border-radius:20px;box-shadow:0 3px 5px -1px rgba(20,20,40,.10);"></div>
<div style="left:965.8px;top:1103.8px;width:1543.8px;height:295px;border-radius:20px;overflow:hidden;"><div style="left:0;top:0;width:1543.8px;height:76.1px;background:#f7f8fa"></div></div>
<div style="left:965.8px;top:1103.8px;width:1543.8px;height:295px;border-radius:20px;border:2px solid #e7e8ec;"></div>
<span class="t" style="top:1131.09px;font-size:23.4px;color:#6b7085;-webkit-text-stroke:0.9px #6b7085;letter-spacing:0.636px;left:1009.20px;">LINKED RESOURCES</span>
<div style="left:969px;top:1286.8px;width:1538px;height:2px;background:#f4f5f8;"></div>
<svg style="left:1009.1px;top:1220.9px;" width="28" height="28" viewBox="0 0 24 24" fill="none" stroke="#a3a7b3" stroke-width="1.9" stroke-linecap="round" stroke-linejoin="round"><rect width="7" height="9" x="3" y="3" rx="1"/><rect width="7" height="5" x="14" y="3" rx="1"/><rect width="7" height="9" x="14" y="12" rx="1"/><rect width="7" height="5" x="3" y="16" rx="1"/></svg>
<span class="t" style="top:1206.90px;font-size:24.1px;color:#101114;-webkit-text-stroke:0.5px #101114;letter-spacing:0.742px;left:1058.10px;">Website Redesign Tasks</span>
<span class="t" style="top:1243.28px;font-size:20.7px;color:#6b7085;letter-spacing:0.491px;left:1058.10px;">Task Board</span>
<span class="t" style="top:1225.18px;font-size:21.4px;color:#6b7085;letter-spacing:0.479px;left:2407.70px;">Board</span>
<svg style="left:1009.4px;top:1329.2px;" width="28" height="28" viewBox="0 0 24 24" fill="none" stroke="#a3a7b3" stroke-width="1.9" stroke-linecap="round" stroke-linejoin="round"><path d="M12 7v14"/><path d="M3 18a1 1 0 0 1-1-1V4a1 1 0 0 1 1-1h5a4 4 0 0 1 4 4 4 4 0 0 1 4-4h5a1 1 0 0 1 1 1v13a1 1 0 0 1-1 1h-6a3 3 0 0 0-3 3 3 3 0 0 0-3-3z"/></svg>
<span class="t" style="top:1315.50px;font-size:24.1px;color:#101114;-webkit-text-stroke:0.5px #101114;letter-spacing:0.728px;left:1058.10px;">Brand Voice &amp; Tone</span>
<span class="t" style="top:1353.48px;font-size:20.7px;color:#6b7085;letter-spacing:0.751px;left:1058.10px;">Knowledge Article</span>
<span class="t" style="top:1333.18px;font-size:21.4px;color:#6b7085;letter-spacing:0.578px;left:2403.80px;">Article</span>
</div></body></html>
